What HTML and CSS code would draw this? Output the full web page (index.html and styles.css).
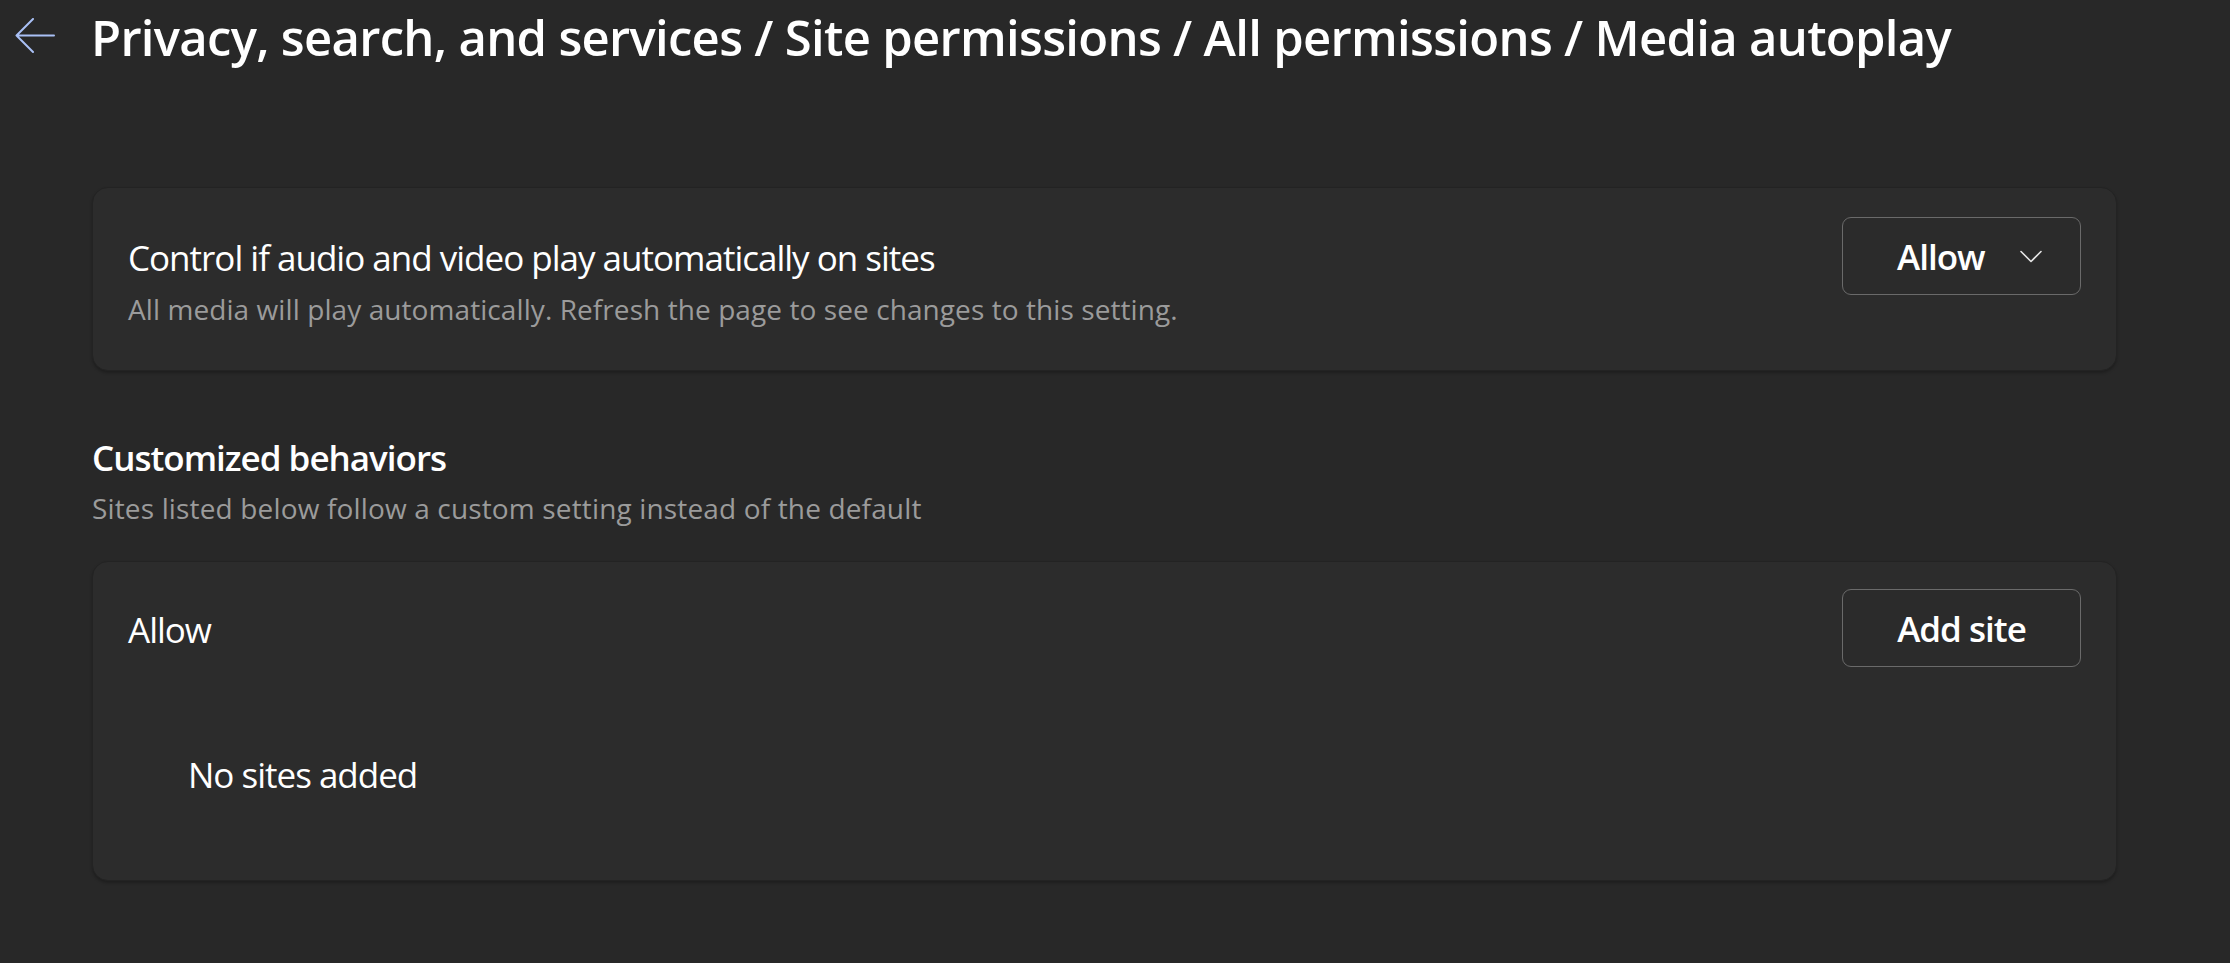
FILE: index.html
```html
<!DOCTYPE html>
<html lang="en">
<head>
<meta charset="utf-8">
<title>Media autoplay</title>
<link rel="stylesheet" href="styles.css">
</head>
<body>
<header class="page-header">
  <button class="back-btn" aria-label="Back">
    <svg class="back-icon" width="40" height="36" viewBox="0 0 40 36">
      <path d="M39 17.5 H1.5 M18 1 L1.5 17.5 L18 34" fill="none" stroke="#a9c0f5" stroke-width="2" stroke-linecap="round" stroke-linejoin="round"/>
    </svg>
  </button>
  <h1 class="page-title">Privacy, search, and services / Site permissions / All permissions / Media autoplay</h1>
</header>

<main class="content">
  <section class="card card-setting">
    <div class="setting-row">
      <div class="setting-text">
        <div class="setting-label">Control if audio and video play automatically on sites</div>
        <div class="setting-desc">All media will play automatically. Refresh the page to see changes to this setting.</div>
      </div>
      <button class="btn dropdown">
        <span class="btn-label">Allow</span>
        <svg class="chevron" width="22" height="13" viewBox="0 0 22 13">
          <polyline points="1,1.5 11,11.5 21,1.5" fill="none" stroke="#e6e6e6" stroke-width="1.6" stroke-linecap="round" stroke-linejoin="round"/>
        </svg>
      </button>
    </div>
  </section>

  <h2 class="section-title">Customized behaviors</h2>
  <p class="section-desc">Sites listed below follow a custom setting instead of the default</p>

  <section class="card card-list">
    <div class="list-header">
      <div class="list-label">Allow</div>
      <button class="btn add-btn">Add site</button>
    </div>
    <div class="empty-state">No sites added</div>
  </section>
</main>
</body>
</html>
```

FILE: styles.css
```css
* {
  box-sizing: border-box;
}

html, body {
  margin: 0;
  padding: 0;
  background: #282828;
  color: #ffffff;
  font-family: "Open Sans", "Noto Sans", sans-serif;
  height: 100%;
  overflow: hidden;
}

.page-header {
  display: flex;
  align-items: flex-start;
  padding: 2px 0 0 15px;
  height: 72px;
}

.back-btn {
  background: none;
  border: none;
  padding: 0;
  margin: 16px 0 0 0;
  width: 40px;
  height: 36px;
  display: block;
  cursor: pointer;
}

.back-icon {
  display: block;
}

.page-title {
  margin: 0 0 0 36px;
  font-size: 49px;
  line-height: 70px;
  font-weight: 600;
  white-space: nowrap;
  letter-spacing: -0.7px;
}

.content {
  margin-left: 92px;
  width: 2025px;
}

.card {
  background: #2c2c2c;
  border: 1px solid #232323;
  border-radius: 16px;
  box-shadow: 0 2px 3px rgba(0, 0, 0, 0.25);
}

.card-setting {
  margin-top: 115px;
  padding: 29px 35px 48px 35px;
}

.setting-row {
  display: flex;
  justify-content: space-between;
  align-items: flex-start;
}

.setting-label {
  font-size: 35px;
  line-height: 76px;
  padding-top: 3px;
  letter-spacing: -1px;
}

.setting-desc {
  font-size: 28px;
  line-height: 26px;
  letter-spacing: 0.08px;
  color: #9b9b9b;
}

.btn {
  font-family: inherit;
  background: #2b2b2b;
  color: #ffffff;
  border: 1px solid #6a6a6a;
  border-radius: 9px;
  width: 239px;
  height: 78px;
  font-size: 35px;
  font-weight: 600;
  letter-spacing: -1px;
  cursor: pointer;
  padding: 0;
}

.dropdown {
  display: flex;
  align-items: center;
  padding: 0 38px 0 54px;
}

.btn-label {
  line-height: 1;
}

.chevron {
  margin-left: auto;
  display: block;
}

.section-title {
  margin: 62px 0 0 0;
  font-size: 35px;
  line-height: 50px;
  font-weight: 600;
  letter-spacing: -1px;
}

.section-desc {
  margin: 5px 0 0 0;
  font-size: 28px;
  line-height: 40px;
  letter-spacing: 0.15px;
  color: #9b9b9b;
}

.card-list {
  margin-top: 33px;
  padding: 27px 35px 0 35px;
}

.list-header {
  display: flex;
  justify-content: space-between;
  align-items: flex-start;
}

.list-label {
  font-size: 35px;
  line-height: 76px;
  padding-top: 3px;
  letter-spacing: -1px;
}

.add-btn {
  text-align: center;
}

.empty-state {
  font-size: 35px;
  line-height: 50px;
  letter-spacing: -1px;
  padding: 82px 0 80px 60px;
}
```
